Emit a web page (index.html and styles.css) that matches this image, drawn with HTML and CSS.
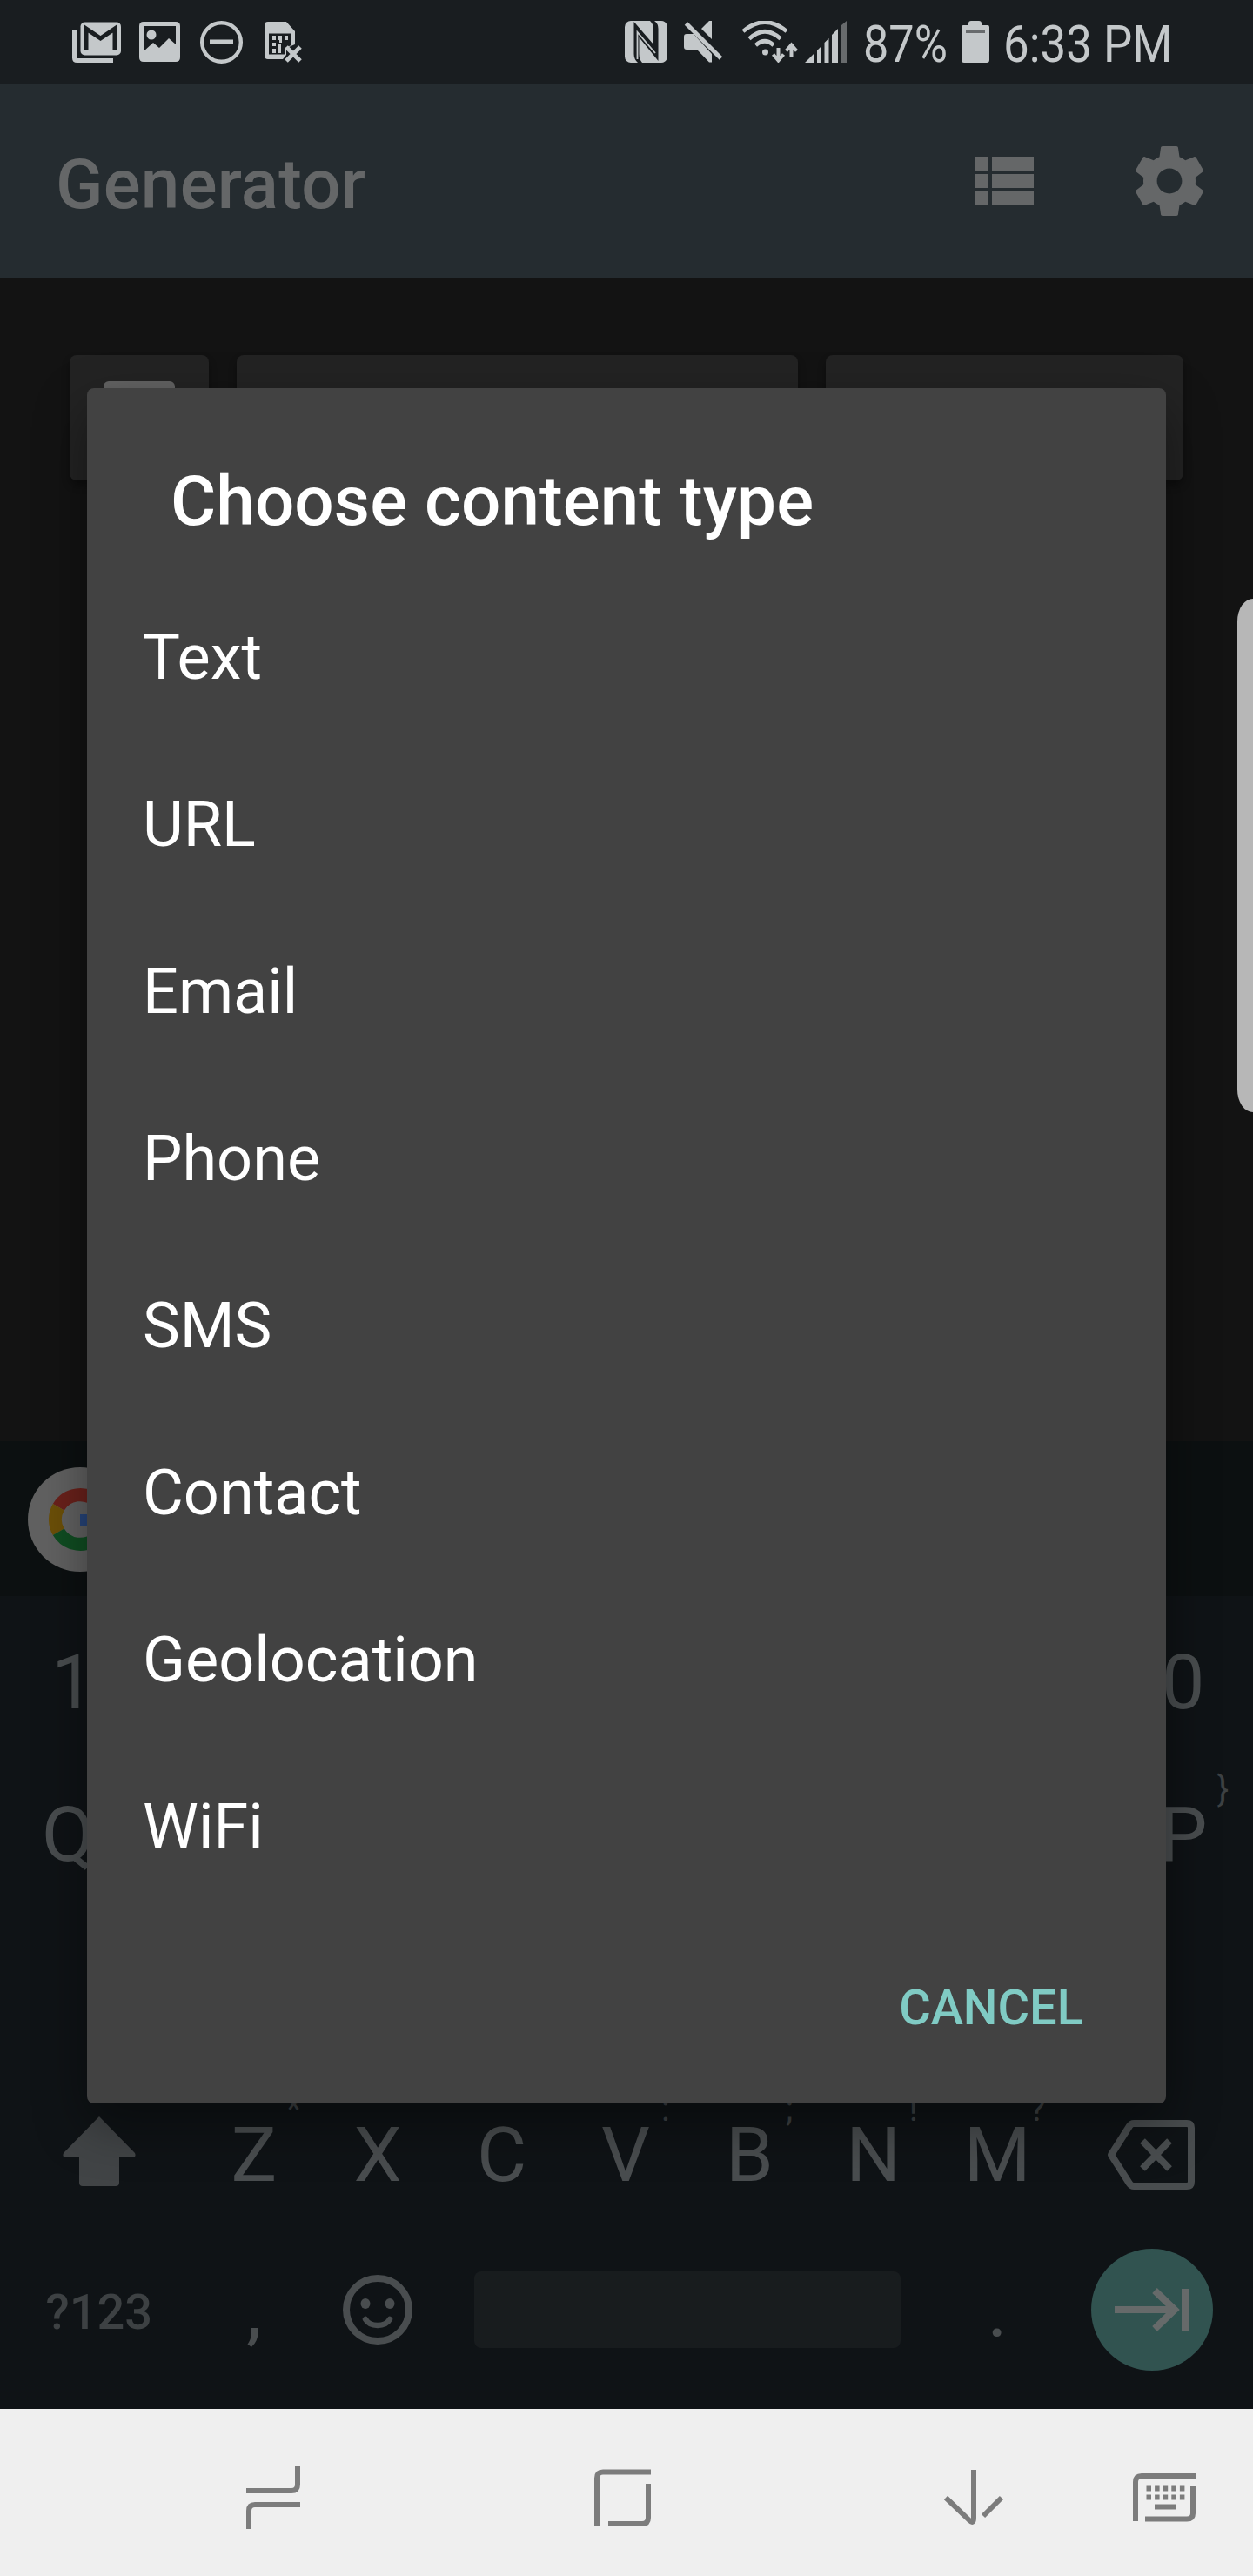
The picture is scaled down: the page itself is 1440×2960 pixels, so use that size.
FILE: index.html
```html
<!DOCTYPE html>
<html lang="en">
<head>
<meta charset="utf-8">
<title>Generator</title>
<link rel="stylesheet" href="styles.css">
</head>
<body>
<div class="screen">
  <header class="status">
    <div class="status-left">
      <svg class="i-mail" viewBox="0 0 56 47"><path d="M2.5 9.500V41.500Q2.500 44.500 5.500 44.500H47" fill="none" stroke="currentColor" stroke-width="5"/><rect x="9.500" y="0.500" width="46.500" height="38" rx="5" fill="currentColor"/><path d="M16 33V8L32.500 19 49 8V33" class="cut" stroke-width="5"/></svg>
      <svg class="i-image" viewBox="0 0 47 46"><path fill="currentColor" fill-rule="evenodd" d="M5 0H42Q47 0 47 5V41Q47 46 42 46H5Q0 46 0 41V5Q0 0 5 0ZM5 5V34L16 24 23 30 34 19 42 26V5Z"/><circle cx="14" cy="15" r="5.500" fill="currentColor"/></svg>
      <svg class="i-dnd" viewBox="0 0 49 49"><circle cx="24.500" cy="24.500" r="22.300" fill="none" stroke="currentColor" stroke-width="4.400"/><path d="M11 24H38" stroke="currentColor" stroke-width="5"/></svg>
      <svg class="i-sim" viewBox="0 0 43 47"><path fill="currentColor" d="M4 0H25L35 11V26L28 29H25V38L21 43H4Q0 43 0 39V4Q0 0 4 0Z"/><path d="M5 13.500H30.500V27L24 30V37.500H5Z" fill="#191d20"/><path fill="currentColor" d="M9 16h4v5H9zM16 16h4v8h-3v-3h-1zM23 16h4v5h-4zM9 24h4v4H9zM9 31h4v5H9zM16 26h3v10h-3z"/><path d="M25 29 41 45M41 29 25 45" stroke="currentColor" stroke-width="5"/></svg>
    </div>
    <div class="status-right">
      <svg class="i-nfc" viewBox="0 0 49 48"><rect width="49" height="48" rx="7" fill="currentColor"/><path fill="#191d20" d="M10.500 1 33 27V9Q33 4 29 0H34Q38.500 3 38.500 9V46L16.500 19V38Q16.500 44 20 48H15Q10.500 44 10.500 38Z"/><path stroke="currentColor" stroke-width="1.800" fill="none" d="M14.500 44V13L35 37"/></svg>
      <svg class="i-mute" viewBox="0 0 45 48"><path fill="currentColor" d="M32 0V21L20 9 29 0ZM0 18Q0 15 3 15H11L32 38V47.500H29L15 33H3Q0 33 0 30Z"/><path d="M2.500 3 42.500 43" stroke="currentColor" stroke-width="5"/></svg>
      <svg class="i-wifi" viewBox="0 0 66 48"><g fill="none" stroke="currentColor" stroke-width="4.600"><path d="M2 12Q27-9 52 12M9 20.500Q27 4 45 20.500M16.500 28Q27 18.500 37 28"/></g><circle cx="27.500" cy="36" r="3.500" fill="currentColor"/><path fill="none" stroke="currentColor" stroke-width="4" d="M42.500 31V45M36.500 38.500 42.500 45.500 48.500 38.500M57.500 42V28M51.500 34.500 57.500 27.500 63.500 34.500"/></svg>
      <svg class="i-signal" viewBox="0 0 49 48"><path fill="currentColor" d="M0 48 11 37V48ZM14 34 19 29V48H14ZM22.500 25 27.500 20V48H22.500ZM31 16 38 9V48H31Z"/><path fill="#686b6d" d="M42 5 48 0V48H42Z"/></svg>
      <span class="status-text pct"><span>87%</span></span>
      <svg class="i-batt" viewBox="0 0 32 48"><path fill="currentColor" d="M8 5V3Q8 0 11 0H20Q23 0 23 3V5H30Q32 5 32 7V45Q32 48 29 48H3Q0 48 0 45V7Q0 5 2 5Z"/><rect x="5" y="10" width="22" height="4" fill="#686b6d"/></svg>
      <span class="status-text time"><span>6:33 PM</span></span>
    </div>
  </header>

  <header class="appbar">
    <h1>Generator</h1>
    <div class="actions">
      <svg viewBox="0 0 24 24"><path fill="currentColor" d="M4 14h4v-4H4v4zm0 5h4v-4H4v4zM4 9h4V5H4v4zm5 5h12v-4H9v4zm0 5h12v-4H9v4zM9 5v4h12V5H9z"/></svg>
      <svg viewBox="0 0 24 24"><path fill="currentColor" d="M19.430 12.980c.040-.320.070-.640.070-.980s-.030-.660-.070-.980l2.110-1.650c.190-.150.240-.420.120-.640l-2-3.460c-.120-.220-.390-.300-.610-.220l-2.490 1c-.520-.400-1.080-.730-1.690-.980l-.380-2.650C14.460 2.180 14.250 2 14 2h-4c-.250 0-.460.180-.490.420l-.380 2.650c-.610.250-1.170.590-1.690.980l-2.490-1c-.230-.090-.490 0-.610.220l-2 3.460c-.130.220-.070.490.120.640l2.110 1.650c-.040.320-.070.650-.070.980s.030.660.070.980l-2.110 1.650c-.190.150-.240.420-.120.640l2 3.460c.120.220.390.300.610.220l2.490-1c.520.400 1.080.730 1.690.980l.380 2.650c.030.240.240.420.490.420h4c.250 0 .460-.180.490-.420l.380-2.650c.610-.250 1.170-.590 1.690-.980l2.490 1c.230.090.490 0 .610-.220l2-3.460c.120-.220.070-.490-.120-.640l-2.110-1.650zM12 15.600c-1.980 0-3.600-1.620-3.600-3.600s1.620-3.600 3.600-3.600 3.600 1.620 3.600 3.600-1.620 3.600-3.600 3.600z"/></svg>
    </div>
  </header>

  <main class="content">
    <div class="card card-type"><svg viewBox="0 0 82 60"><rect x="4" y="4" width="74" height="52" rx="2" fill="#292929" stroke="#626262" stroke-width="8"/></svg></div>
    <div class="card card-name"></div>
    <div class="card card-save"></div>
  </main>

  <section class="keyboard">
    <div class="suggest">
      <svg viewBox="0 0 120 120"><circle cx="60" cy="60" r="60" fill="#616161"/><g fill="none" stroke-width="15"><path stroke="#6a211b" d="M80 40A28.500 28.500 0 0 0 35.300 45.700"/><path stroke="#6b4f08" d="M35.300 45.700A28.500 28.500 0 0 0 35.300 74.300"/><path stroke="#104d22" d="M35.300 74.300A28.500 28.500 0 0 0 80 80"/></g><path fill="#27457a" d="M60 54H96V67H60Z"/></svg>
    </div>
    <div class="row digits"><div class="key one">1</div><div class="key">0</div></div>
    <div class="row ends"><div class="key">Q</div><div class="key">P<i>}</i></div></div>
    <div class="row"></div>
    <div class="row">
      <div class="key wide"><svg class="shift" viewBox="0 0 84 80"><path fill="currentColor" d="M42 0 83 42Q85 47 80 47H65V76Q65 80 61 80H23Q19 80 19 76V47H4Q-1 47 1 42Z"/></svg></div>
      <div class="key">Z<i>*</i></div><div class="key">X<i>"</i></div><div class="key">C<i>'</i></div><div class="key">V<i>:</i></div><div class="key">B<i>;</i></div><div class="key">N<i>!</i></div><div class="key">M<i>?</i></div>
      <div class="key wide"><svg class="back" viewBox="0 0 102 80"><path fill="none" stroke="currentColor" stroke-width="8" stroke-linejoin="round" d="M31 4H92Q97 4 97 9V71Q97 76 92 76H31Q28 76 26 73L5 40 26 7Q28 4 31 4Z"/><path stroke="currentColor" stroke-width="8" d="M41 24 72 56M72 24 41 56"/></svg></div>
    </div>
    <div class="row bottom">
      <div class="key wide sym">?123</div>
      <div class="key">,</div>
      <div class="key"><svg class="smile" viewBox="0 0 80 80"><circle cx="40" cy="40" r="36" fill="none" stroke="currentColor" stroke-width="8"/><ellipse cx="26" cy="33" rx="5.500" ry="6" fill="currentColor"/><ellipse cx="54" cy="33" rx="5.500" ry="6" fill="currentColor"/><path fill="none" stroke="currentColor" stroke-width="6.500" stroke-linecap="round" d="M26 51Q30 58 40 58T54 51"/></svg></div>
      <div class="key space"><div></div></div>
      <div class="key">.</div>
      <div class="key wide"><div class="enter"><svg viewBox="0 0 86 50"><path fill="none" stroke="currentColor" stroke-width="8" d="M0 25H69M46 3 69 25 46 47M81 1V49"/></svg></div></div>
    </div>
  </section>

  <nav class="nav">
    <svg class="n-recent" viewBox="0 0 62 72"><path d="M59 0V21Q59 28 52 28H0M3 72V51Q3 44 10 44H62"/></svg>
    <svg class="n-home" viewBox="0 0 65 67"><path d="M65 3.500H10Q3 3.500 3 10.500V66M62 17V56Q62 63 55 63H16"/></svg>
    <svg class="n-down" viewBox="0 0 70 64"><path d="M35 0V55Q35 63 30 58L3 32M67 32 46 53"/></svg>
    <svg class="n-kbd" viewBox="0 0 72 56"><path d="M72 3H10Q3 3 3 10V55M69 15V46Q69 52.500 62 52.500H14"/><path stroke-dasharray="5.500 4.100" d="M15.500 17.500H60M15.500 27.500H60"/><path d="M25 38.500H49"/></svg>
  </nav>

  <div class="edge"></div>

  <div class="dialog" role="dialog">
    <h2>Choose content type</h2>
    <ul>
      <li>Text</li><li>URL</li><li>Email</li><li>Phone</li><li>SMS</li><li>Contact</li><li>Geolocation</li><li>WiFi</li>
    </ul>
    <button>CANCEL</button>
  </div>
</div>
</body>
</html>
```
FILE: styles.css
```css
* { box-sizing: border-box; }
body { margin: 0; background: #131313; font-family: Roboto, "Liberation Sans", sans-serif; }
svg { display: block; flex: none; }
h1, h2, ul { margin: 0; padding: 0; }
.screen { position: relative; width: 1440px; height: 2960px; display: flex; flex-direction: column; overflow: hidden; background: #131313; }

.status { height: 96px; flex: none; background: #191d20; color: #c4c8ca; display: flex; justify-content: space-between; padding: 0 95px 0 83px; }
.status-left, .status-right { display: flex; align-items: center; }
.cut { fill: none; stroke: #191d20; }
.i-mail { width: 56px; height: 47px; margin-right: 21px; }
.i-image { width: 47px; height: 46px; margin-right: 23px; }
.i-dnd { width: 49px; height: 49px; margin-right: 25px; }
.i-sim { width: 43px; height: 47px; }
.i-nfc { width: 49px; height: 48px; margin-right: 19px; }
.i-mute { width: 45px; height: 48px; margin-right: 21px; }
.i-wifi { width: 66px; height: 48px; margin-right: 7px; }
.i-signal { width: 49px; height: 48px; margin-right: 18px; }
.i-batt { width: 32px; height: 48px; margin-right: 16px; }
.status-text { font-size: 60px; line-height: 91px; padding-top: 5px; white-space: nowrap; }
.status-text span { display: block; transform: scaleX(.87); transform-origin: 0 50%; }
.pct { width: 113px; }
.time { width: 192px; }
.time span { transform: scaleX(.88); }

.appbar { height: 224px; flex: none; background: #252c30; color: #656768; display: flex; align-items: center; justify-content: space-between; padding: 0 48px 0 64px; }
.appbar h1 { font-size: 80px; font-weight: 500; line-height: 100px; letter-spacing: .25px; padding-top: 8px; }
.actions { display: flex; gap: 96px; }
.actions svg { width: 96px; height: 96px; }

.content { height: 1336px; flex: none; display: grid; grid-template-columns: 160px 645px 411px; gap: 32px; padding: 88px 80px 0; align-items: start; }
.card { height: 144px; border-radius: 8px; background: #232323; box-shadow: 0 6px 10px rgba(0,0,0,.3); }
.card-type { padding: 30px 0 0 39px; }
.card-type svg { width: 82px; height: 60px; }

.keyboard { height: 1112px; flex: none; background: #0f1316; color: #494d4f; }
.suggest { height: 178px; margin-bottom: 16px; padding: 30px 32px; background: #0c1011; }
.suggest svg { width: 120px; height: 120px; }
.row { height: 184px; padding: 0 9px 0 7px; display: flex; }
.row.digits { height: 166px; }
.digits, .ends { justify-content: space-between; }
.row.bottom { height: 172px; }
.key { position: relative; width: 142.4px; display: flex; align-items: center; justify-content: center; font-size: 88px; line-height: 104px; }
.key.one { padding-left: 11px; }
.key i { position: absolute; left: 68px; width: 98px; top: 16px; text-align: center; font-style: normal; font-size: 40px; line-height: 48px; color: #3d4143; }
.key.wide { width: 213.6px; }
.key.sym { font-size: 56px; font-weight: 500; color: #3d4143; padding-top: 5px; }
.key.space { width: 569.6px; }
.space div { width: 490px; height: 88px; border-radius: 8px; background: #181c1e; }
.shift { width: 84px; height: 80px; margin-bottom: 8px; color: #414446; }
.back { width: 102px; height: 80px; margin-right: 3px; }
.smile { width: 80px; height: 80px; }
.enter { width: 140px; height: 140px; border-radius: 50%; background: #315350; color: #666a6a; display: flex; align-items: center; justify-content: center; }
.enter svg { width: 86px; height: 50px; }

.nav { height: 192px; flex: none; background: #efefef; display: flex; align-items: center; padding-left: 283px; padding-top: 12px; }
.nav svg { fill: none; stroke: #7c7c7c; stroke-width: 6; }
.n-recent { width: 62px; height: 72px; margin-right: 338px; }
.n-home { width: 65px; height: 67px; margin-right: 336px; }
.n-down { width: 70px; height: 64px; margin-right: 148px; }
.n-kbd { width: 72px; height: 56px; }

.edge { position: absolute; right: 0; top: 688px; width: 18px; height: 590px; border-radius: 18px 0 0 18px / 26px 0 0 26px; background: #b7b7b7; }

.dialog { position: absolute; left: 100px; top: 446px; width: 1240px; height: 1971px; border-radius: 8px; background: #424242; color: #fff; box-shadow: 0 24px 60px rgba(0,0,0,.4); display: flex; flex-direction: column; }
.dialog h2 { height: 214px; padding: 80px 96px 0; font-size: 80px; font-weight: 500; line-height: 100px; letter-spacing: .1px; }
.dialog ul { list-style: none; }
.dialog li { height: 192px; padding-left: 64px; font-size: 72px; line-height: 192px; }
.dialog button { align-self: flex-end; margin: 75px 95px 0 0; padding: 0; border: 0; background: none; font: 500 56px/72px Roboto, "Liberation Sans", sans-serif; color: #80cbc4; }
```
